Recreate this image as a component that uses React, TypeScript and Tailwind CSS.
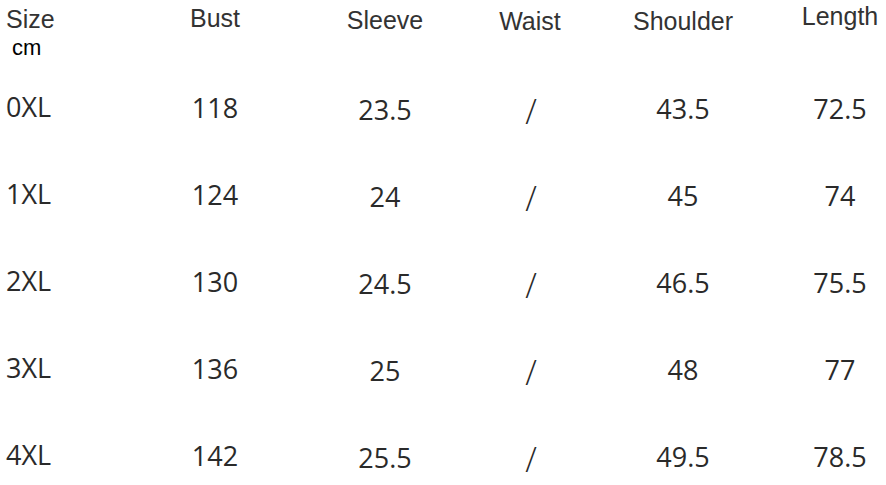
const headers = [
  { label: 'Size', cls: 'text-left pl-[6px] mt-[0px]' },
  { label: 'Bust', cls: 'text-center mt-[-1px]' },
  { label: 'Sleeve', cls: 'text-center mt-[1px]' },
  { label: 'Waist', cls: 'text-center mt-[2px]' },
  { label: 'Shoulder', cls: 'text-center mt-[2px]' },
  { label: 'Length', cls: 'text-center mt-[-3px]' },
]

const rows = [
  ['0XL', '118', '23.5', '/', '43.5', '72.5'],
  ['1XL', '124', '24', '/', '45', '74'],
  ['2XL', '130', '24.5', '/', '46.5', '75.5'],
  ['3XL', '136', '25', '/', '48', '77'],
  ['4XL', '142', '25.5', '/', '49.5', '78.5'],
]

// vertical nudges for the value cells, per column
const cellCls = [
  'text-left pl-[6px]',
  'text-center mt-[1px]',
  'text-center mt-[3px]',
  'text-center mt-[4px] pl-[2px] text-[34px] font-light',
  'text-center mt-[2px]',
  'text-center mt-[2px]',
]

const cols = 'grid grid-cols-[130px_170px_170px_120px_186px_128px]'

export default function App() {
  return (
    <div className="w-[886px] h-[485px] overflow-hidden bg-white">
      <div className="pt-[4px]">
        <div className={`${cols} h-[30px] text-[25px] leading-[30px] text-[#333333] font-['Liberation_Sans',Arial,sans-serif]`}>
          {headers.map((h) => (
            <div key={h.label} className={h.cls}>{h.label}</div>
          ))}
        </div>
        <div className="ml-[12px] mt-[2px] text-[22px] leading-[24px] text-black font-['Liberation_Sans',Arial,sans-serif]">
          cm
        </div>
      </div>

      <div className="mt-[29px] font-['Open_Sans',sans-serif] text-[27px] leading-[36px] text-[#2a2a2a]">
        {rows.map((r) => (
          <div key={r[0]} className={`${cols} h-[87px]`}>
            {r.map((v, i) => (
              <div key={i} className={cellCls[i]}>{v}</div>
            ))}
          </div>
        ))}
      </div>
    </div>
  )
}
